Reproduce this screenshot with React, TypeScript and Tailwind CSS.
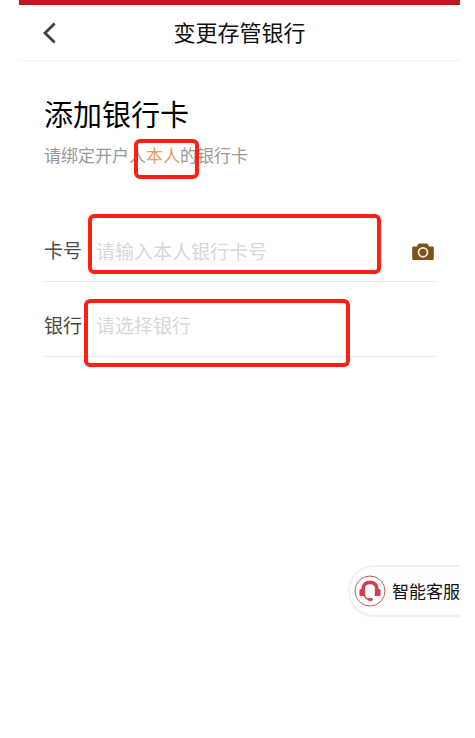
import type { ReactNode } from "react";
import clsx from "clsx";

const Highlight = ({ className }: { className: string }) => (
  <span
    aria-hidden="true"
    className={clsx(
      "absolute border-4 border-[#ff2014] rounded-md pointer-events-none",
      className
    )}
  />
);

const BackIcon = () => (
  <svg width="14" height="22" viewBox="0 0 14 22" fill="none">
    <path
      d="M11.6 1.4 L2 11 L11.6 20.6"
      stroke="#404040"
      strokeWidth="2.8"
    />
  </svg>
);

const CameraIcon = () => (
  <svg width="22" height="18" viewBox="0 0 22 18">
    <path
      d="M1.5 3.4 H5 L6.3 1 Q6.6 .4 7.4 .4 H14.6 Q15.4 .4 15.7 1 L17 3.4 H20.5 Q21.8 3.4 21.8 4.7 V15.8 Q21.8 17.1 20.5 17.1 H1.5 Q.2 17.1 .2 15.8 V4.7 Q.2 3.4 1.5 3.4 Z"
      fill="#7d5218"
    />
    <circle
      cx="11"
      cy="9.3"
      r="4.5"
      fill="none"
      stroke="#f7ecd9"
      strokeWidth="1.8"
    />
  </svg>
);

const HeadsetIcon = () => (
  <svg width="32" height="32" viewBox="0 0 32 32" fill="none">
    <circle cx="16" cy="16" r="15" fill="white" stroke="#cb5661" />
    <path
      d="M9.2 15 V13.4 C9.2 5.4 22.8 5.4 22.8 13.4 V15"
      stroke="#d33f4b"
      strokeWidth="3.6"
    />
    <path
      d="M7 14 H11.2 V21 H7 Q5.4 21 5.4 19.4 V15.6 Q5.4 14 7 14 Z M20.8 14 H25 Q26.6 14 26.6 15.6 V19.4 Q26.6 21 25 21 H20.8 Z"
      fill="#d33f4b"
    />
    <path
      d="M10.4 20 C10.8 22.4 12.6 24 15 24.4"
      stroke="#d33f4b"
      strokeWidth="1.5"
    />
    <ellipse cx="16.4" cy="24.5" rx="2.5" ry="1.7" fill="#d33f4b" />
  </svg>
);

interface FieldProps {
  id: string;
  label: string;
  children: ReactNode;
}

const Field = ({ id, label, children }: FieldProps) => (
  <div className="relative flex items-center h-[75px] pt-3 border-b border-[#ebebeb]">
    <label
      htmlFor={id}
      className="w-[52px] shrink-0 text-[19px] leading-7 text-[#4a4a4a]"
    >
      {label}
    </label>
    {children}
  </div>
);

const App = () => {
  return (
    <div className="min-h-screen bg-white pl-[19px] pr-[15px] font-['Noto_Sans_CJK_SC','Noto_Sans',sans-serif]">
      <header className="flex items-center h-[61px] border-t-[5px] border-t-[#be1820] border-b border-b-[#f4f4f4] px-6">
        <button type="button" aria-label="返回" className="w-8 shrink-0">
          <BackIcon />
        </button>
        <h1 className="flex-1 pb-1 text-center text-[22px] leading-8 text-[#111111]">
          变更存管银行
        </h1>
        <span className="w-8 shrink-0" />
      </header>

      <main className="pl-[25px] pr-6 pt-8">
        <h2 className="text-[29px] leading-10 text-black">添加银行卡</h2>
        <p className="relative mt-2.5 text-[17px] leading-6 text-[#999999]">
          请绑定开户人<span className="text-[#e99a5f]">本人</span>的银行卡
          <Highlight className="left-[90px] -top-1 w-[65px] h-10" />
        </p>

        <form className="mt-10">
          <Field id="card" label="卡号">
            <input
              id="card"
              type="text"
              inputMode="numeric"
              placeholder="请输入本人银行卡号"
              className="flex-1 min-w-0 h-8 text-[19px] text-[#4a4a4a] placeholder:text-[#d8d8d8] outline-none"
            />
            <button type="button" aria-label="拍照识别" className="mr-0.5 pt-1">
              <CameraIcon />
            </button>
            <Highlight className="left-[44px] top-[7px] w-[293px] h-[60px]" />
          </Field>
          <Field id="bank" label="银行">
            <select
              id="bank"
              defaultValue=""
              className="flex-1 min-w-0 h-8 appearance-none bg-transparent text-[19px] text-[#d8d8d8] outline-none"
            >
              <option value="">请选择银行</option>
            </select>
            <Highlight className="left-[40px] top-[17px] w-[266px] h-[68px]" />
          </Field>
        </form>
      </main>

      <div className="flex justify-end mt-[208px]">
        <button
          type="button"
          className="flex items-center gap-1.5 h-[52px] pl-1 border-2 border-r-0 border-[#f1f1f1] rounded-l-full bg-[#fefefe] text-[17px] text-[#111111]"
        >
          <HeadsetIcon />
          智能客服
        </button>
      </div>
    </div>
  );
};

export default App;
